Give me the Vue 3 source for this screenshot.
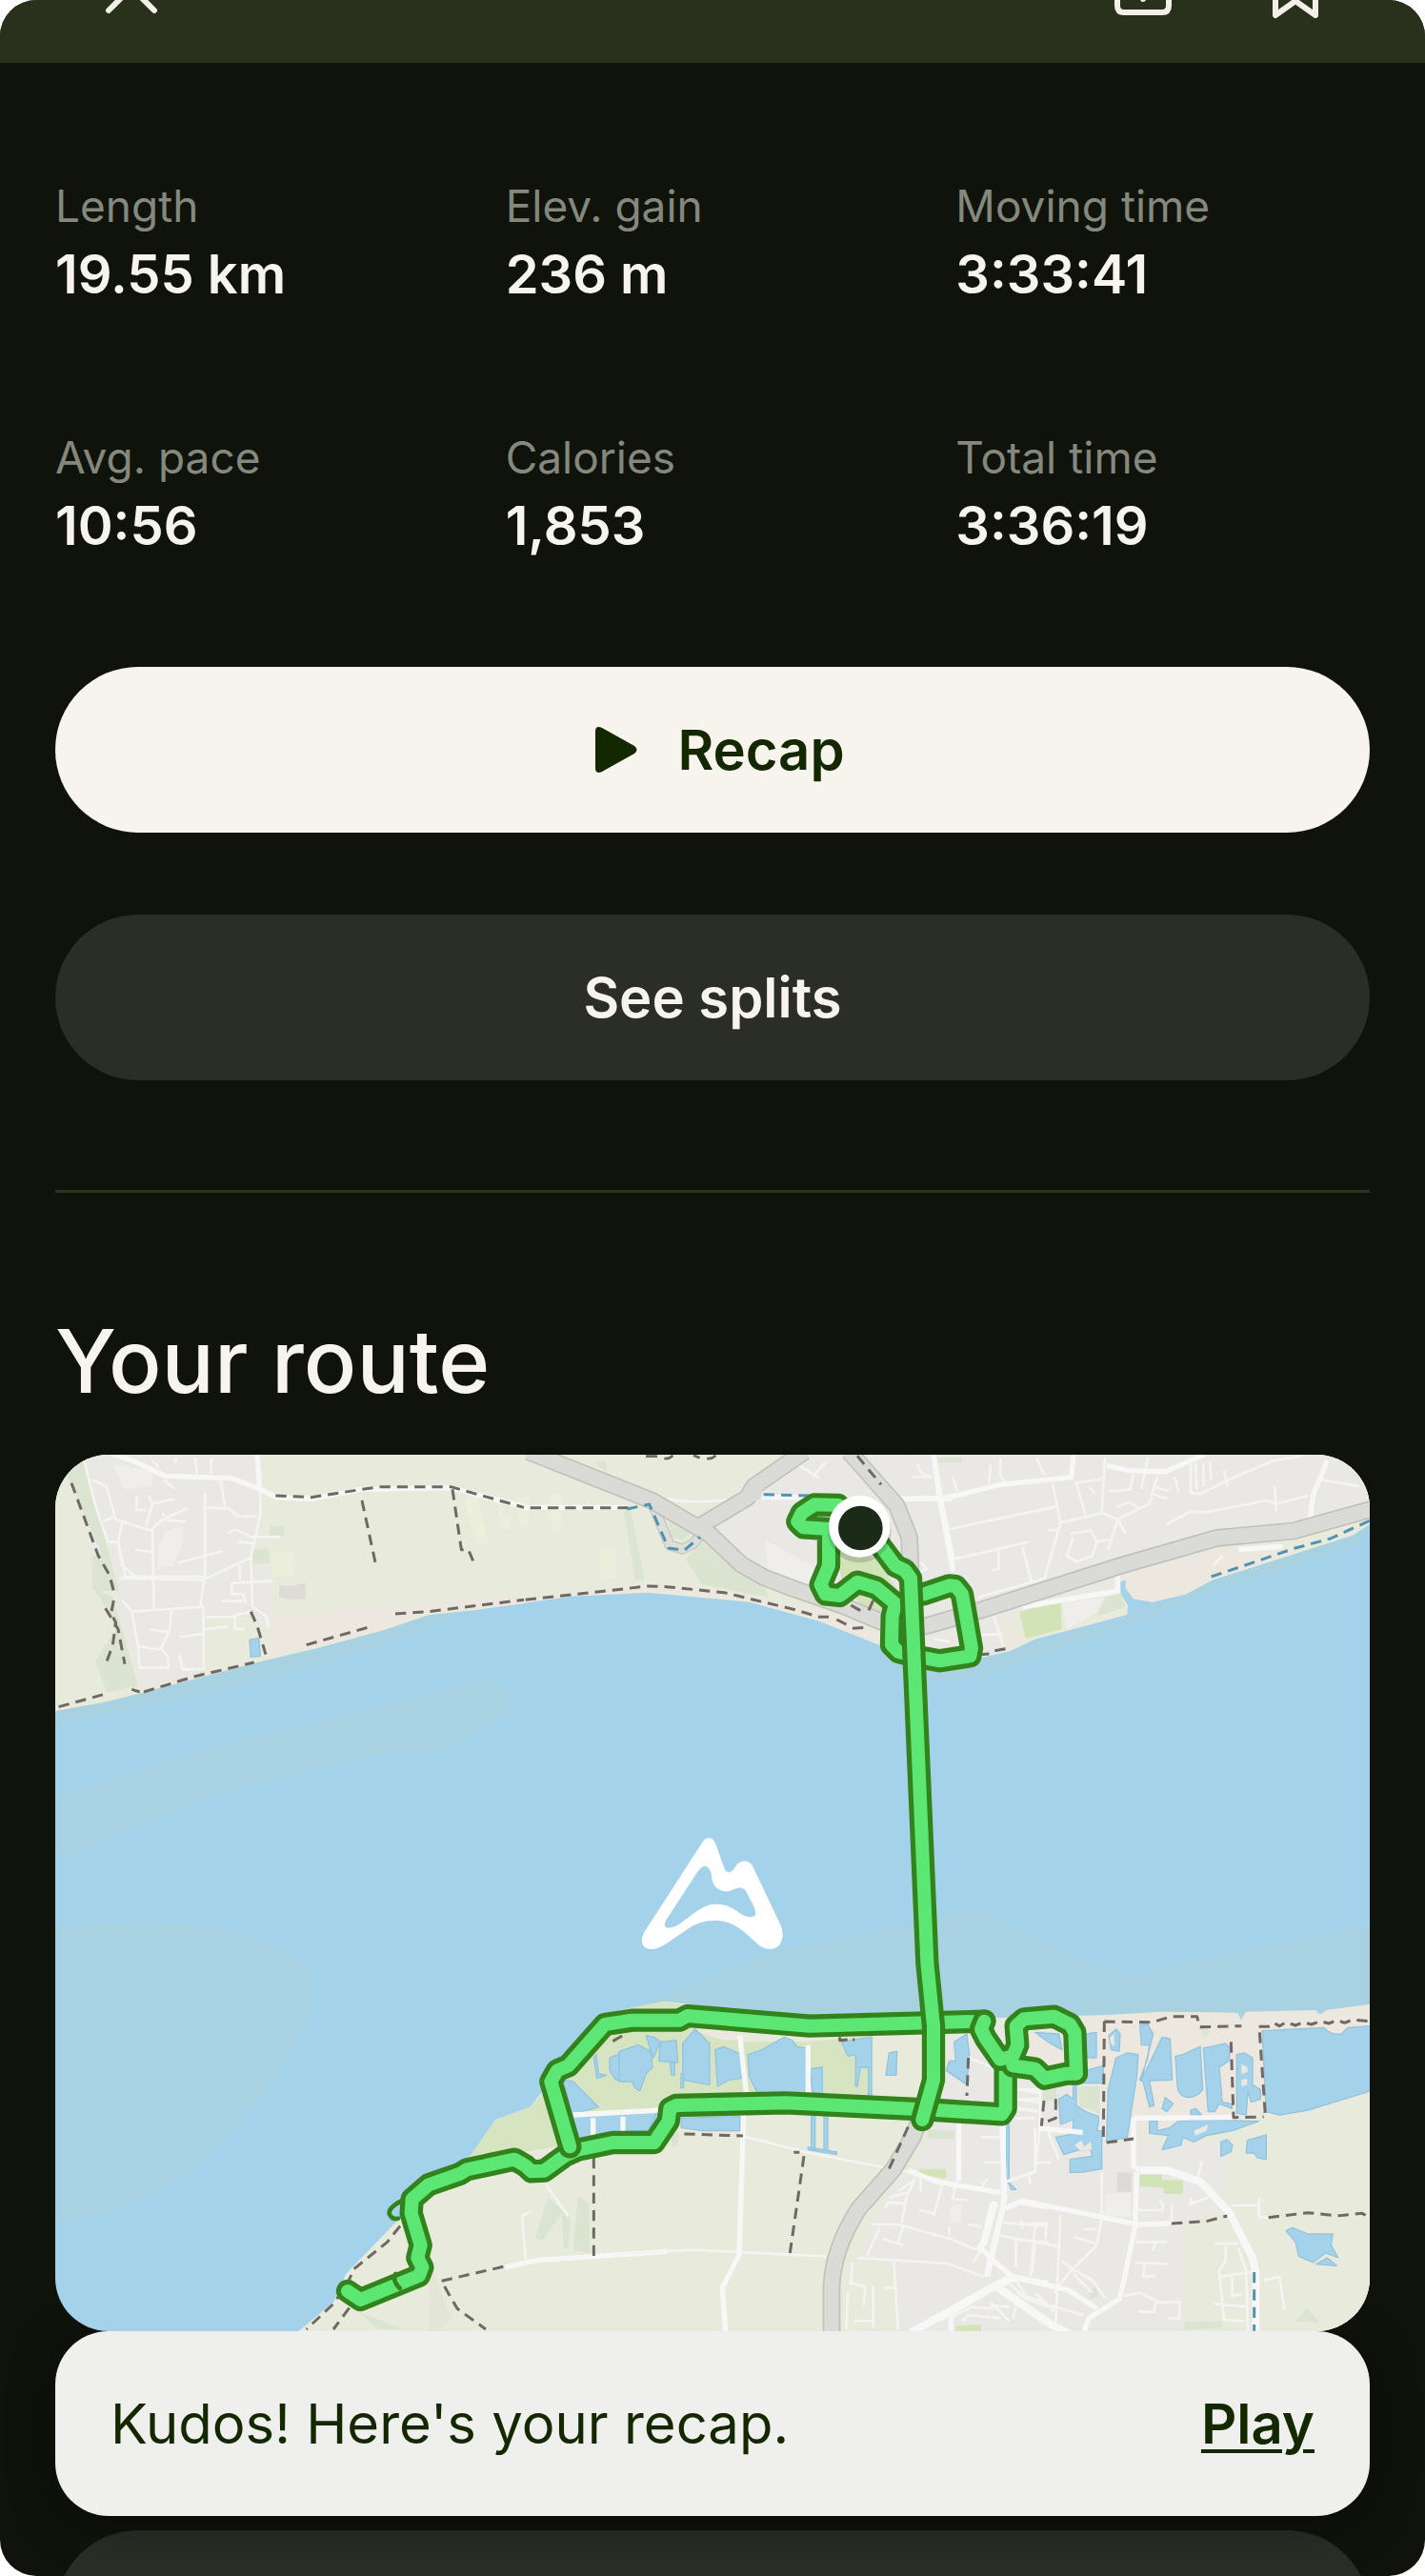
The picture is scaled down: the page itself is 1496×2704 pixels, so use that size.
<script setup>
const stats = [
  { label: 'Length', value: '19.55 km' },
  { label: 'Elev. gain', value: '236 m' },
  { label: 'Moving time', value: '3:33:41' },
  { label: 'Avg. pace', value: '10:56' },
  { label: 'Calories', value: '1,853' },
  { label: 'Total time', value: '3:36:19' },
]

// Map tiles: each tile has its own origin inside the 4140 x 2760 map.
const tiles = [
  {
    id: 'north-west',
    at: 'translate(-24 -51)',
    areas: [
      ['urban', 'M110 50H665L668 240L650 360L700 380L700 600L640 560L500 560L495 740L290 790L215 490L140 350Z'],
      ['sand', 'M690 690L700 560L1000 530L1500 490V520L1200 553L1060 600Z'],
      ['wood', 'M60 100L110 60L225 480L160 480L205 500L285 780L185 800L150 700L215 600L165 500L140 470V370L170 360L60 110Z'],
      ['lawn', 'M705 360H775V435H705ZM1310 190L1350 180L1390 330H1350ZM1430 240H1460V280H1430Z'],
      ['wood', 'M645 350L695 345L700 392L645 395ZM700 275H745V305H700Z'],
      ['block', 'M730 460L755 465L812 456V505L775 508L730 500Z'],
      ['pale', 'M370 290L425 275V330L395 400L345 410L350 340ZM205 80L330 100V150L240 160Z'],
      ['lake', 'M636 634L665 628L670 685L640 688Z'],
    ],
    lanes: [
      'M115 70L150 210L190 325L222 325L245 435H490M140 130L185 150L215 255L325 290L360 255L435 262M175 260L215 245M235 265L222 325L235 400L285 440M330 290L335 535M495 170V440L480 530M500 218L570 220L600 245H660M545 130L558 215M330 70L350 90M465 60L470 110M515 60V110M280 180V225H310M320 180L330 205L400 190M330 205L310 275M360 235L375 250L440 220M405 60L400 80M365 130L400 158',
      'M670 160V240L640 375L645 530L690 560L695 595M225 440L490 445L640 375M235 510L265 545L490 530L492 725L425 728L415 680M265 545L285 655L355 665L385 600L390 540M285 655L290 722H380V690L360 665M320 600L380 610M490 600L570 592M415 625L490 615M500 562H590V600H620M580 455L710 448M580 455V490H615L625 520M545 512H615M605 400V445M570 300Q570 285 600 290L640 310H735M600 325L645 330M410 392L550 355M275 350L330 357M580 560L640 545',
    ],
    roads: ['M200 45L280 75L370 118L580 125L670 160L720 185L830 190L990 160L1270 155L1500 215M660 50L668 160'],
    paths: [
      'M75 140L160 370L195 430L208 480M208 510L200 550L215 580L205 650L180 720M182 535L222 600L243 710M35 845L180 805M265 790L290 798M303 798L460 750L650 705M640 545L660 590L687 680M815 650L1015 593M1095 552L1200 545L1500 508',
      'M718 180L830 185L990 160L1050 152H1270L1500 217M990 195L1032 390M1275 160L1303 350L1325 350L1340 385',
    ],
    cyan: [],
  },
  {
    id: 'north-centre',
    at: 'translate(1326 -51)',
    areas: [
      ['urban', 'M1050 50H1500V670H1380L1180 560L1000 500L880 420L730 290L850 200L870 150Z'],
      ['pale', 'M910 320L1060 400L1060 460L920 430Z'],
      ['sand', 'M0 528L540 462L800 485L1200 560L1290 650L1270 645L1080 572L860 512L540 483L300 495L0 538Z'],
      ['wood', 'M660 380L740 300L900 440L920 500L710 460ZM465 230L485 220L530 445L500 445ZM370 75L410 70V105Z'],
      ['lawn', 'M390 340L440 350V440H390ZM60 150L90 250L110 290L80 280ZM130 190L170 180L160 290L135 270ZM230 170L270 180L265 290L235 290Z'],
      ['grass', 'M1140 350L1260 380L1330 480L1290 550L1240 560L1210 520L1150 450Z'],
      ['wood', 'M600 230L690 285L650 320L615 310Z'],
    ],
    lanes: ['M1010 80L1080 125M1060 120L1100 75M1390 80Q1400 120 1430 118M1400 390L1418 410L1380 430', 'M600 190Q700 210 840 185'],
    roads: ['M150 217H480M1300 190H1500M1440 50L1462 190L1500 380M900 185H1160'],
    paths: ['M170 218H480M155 508L540 465L600 467L780 485L1000 538L1080 562L1110 562M1135 570L1170 588M1185 598L1222 595M1180 525L1215 545M1250 510L1232 550M1200 55L1275 145'],
    cyan: ['M475 222L545 207L605 345L655 352L705 310M905 176L1160 183'],
  },
  {
    id: 'north-east',
    at: 'translate(2706 -51)',
    areas: [
      ['urban', 'M-10 45H1440V225L1200 300L650 450L640 490L300 545L320 640L210 690L-10 700Z'],
      ['sand', 'M668 425L900 345L1160 335L1200 362L940 445L855 490L750 515L690 505L665 470ZM280 560L340 630L300 670L280 660Z'],
      ['grass', 'M330 545L460 515L465 600L350 630Z'],
      ['pale', 'M465 520L600 500L570 550L480 600Z'],
      ['wood', 'M600 500L650 490L665 530L575 560ZM70 60H150V75H70Z'],
    ],
    lanes: [
      'M110 285L445 215M125 380L360 325M340 340L368 450M265 350V410L245 415M435 140L460 265L410 440L200 500M460 265L590 235L640 255L740 205L765 120M510 140L538 240M600 60L590 235M640 255L610 350M490 300L555 290L575 325L560 370L510 388L480 370L500 310M570 325L615 318M640 255L665 300M635 215L680 200L705 220M505 140L590 128M270 60V120L290 140M385 60L408 115',
      'M795 270L870 230L920 232L1110 195L1140 205L1240 180M1135 150L1140 230M870 80V170L900 175L1000 125L1130 70L1220 55M885 80L890 160M910 80V150M930 70L935 130M820 120L832 170M715 160L735 60M1285 130L1400 150M120 120L135 165M240 80L235 140M690 110L680 160L640 165M550 150L570 175M975 100L985 150M-10 120L55 122M250 560L280 655M200 620L280 615M60 630L110 640M940 400L970 370M420 288H455M610 165H650M750 150L800 165M750 175L795 190',
    ],
    roads: ['M0 188H80L130 180L270 145L495 122L500 50M60 50L80 190L122 420M605 85L670 100L790 105L915 50M1300 70L1255 180L1245 260M340 530L640 480V430M1020 350L1160 340'],
    paths: ['M208 680L235 678M253 668L290 662'],
    cyan: ['M935 435L1200 345L1310 315L1435 258'],
  },
  {
    id: 'south-west',
    at: 'translate(576 1599)',
    areas: [
      ['wet', 'M730 610L810 495L920 455L980 390L1060 570L880 600L730 630ZM1020 350L1160 200L1350 130V460L1060 470Z'],
      ['lake', 'M1025 370L1055 375L1135 455L1050 480ZM1050 485L1350 470L1300 530L1060 560ZM1170 300L1230 275L1270 250L1310 290L1305 330L1270 385L1265 405L1255 400L1250 375L1190 370L1170 340Z'],
      ['lake', 'M1120 300L1128 290L1135 350L1160 355L1130 365ZM1290 225L1315 215L1350 230V325L1325 320L1320 260L1295 265Z'],
      ['wood', 'M975 740L1045 800L1040 900L1025 900L1020 790L960 875L935 870ZM1070 735L1105 760L1108 915L1055 905ZM380 1100L520 1155H440Z'],
      ['shade', 'M605 950L670 1120L635 1160H600Z'],
    ],
    lanes: ['M905 935L895 800L925 780', 'M970 700L1040 800'],
    roads: ['M840 960L940 938L1350 910M1055 480L1330 465M1118 490V550M1212 485V540'],
    paths: ['M510 830L470 880L365 965L340 1020L295 1080L215 1155M350 1088L300 1155M835 958L640 1003L690 1090L780 1155M1120 615V925M1180 248L1220 225'],
    cyan: [],
  },
  {
    id: 'south-centre',
    at: 'translate(1776 1599)',
    areas: [
      ['wet', 'M0 150L140 122L300 150L395 250L600 250L800 230V430H0Z'],
      ['sand', 'M230 190H390V245L330 245L240 215Z'],
      ['urban', 'M800 220L1180 180L1350 240V1165H870V950H740L820 800L920 560V430H800Z'],
      ['land', 'M800 240H1000V430H800ZM920 520L970 520L930 680L870 650L800 800L750 950L720 1160H620V900L740 750ZM760 940L860 945L860 1010L820 1140L770 1110Z'],
      ['lake', 'M0 280L30 270L60 260L100 280L105 330L85 350L65 405L50 395L40 375L0 375ZM130 250L180 245L185 315L125 310ZM200 255L240 210L285 255L285 385L200 370ZM302 275L330 265L385 290V365L345 370L310 390ZM405 290L450 275L520 235L545 245L560 265L590 270V410H435L410 360ZM600 335L640 330V410H610Z'],
      ['lake', 'M110 235L130 250L108 300L100 280L85 230ZM195 350H203V395H195ZM160 315H175V355H165ZM15 475L120 470L90 530H20ZM195 490L380 485V530H260L195 520ZM700 250L795 235V420L785 420V330L760 330L750 390H745V290L720 295ZM850 285L875 280L873 355L840 355ZM1055 250L1095 225L1103 290L1095 385L1030 340L1040 310L1060 310ZM605 480H617V590H605ZM645 480H657V590H645ZM595 582L685 597V605L595 590ZM1218 500H1228V685H1218ZM1225 690L1250 715L1235 715Z'],
      ['grass', 'M945 650H1030V680L945 670ZM1060 1145L1140 1140V1160H1060Z'],
      ['wood', 'M970 525L1055 530V555H970ZM165 540L190 530L185 580H165Z'],
      ['pale', 'M1040 770L1080 760L1075 820L1045 820Z'],
    ],
    lanes: [
      'M395 548L600 600L910 660M0 918L230 905L650 925M750 930L1035 948L1150 990M795 825L880 825L1040 870L1140 910M930 680L905 740L890 820M1020 690L990 800M1060 690L1050 745L1100 748M920 690L880 720M850 740L905 725M835 775L850 755L900 760M820 835L780 925M830 870L895 890M895 830L880 880M1100 825L1140 830M1150 630H1200M1140 710L1160 680M1040 830V860M945 780L990 790M950 680L950 720',
      'M735 945L730 1010L775 1020L770 1080M800 1020V1150M865 940L870 1020L878 1155M740 1130L800 1128M720 1040L715 1155M835 1025H865M1115 945L1140 905M1310 520V660L1220 690M1240 875L1350 880M1310 830L1295 990M1250 880V960M1210 820L1350 830M1265 810L1270 840M1250 1000L1280 1050L1350 1075M1040 1120L1110 1085L1180 1090M1080 1130L1100 1110L1200 1120M1170 1080L1230 1085M1255 400L1320 410M1255 430L1320 440M1255 460L1320 470M1100 300L1200 340',
    ],
    roads: ['M392 480L378 920L325 1025L335 1160M595 260V410M380 230L400 410M910 655L1000 690L1200 725M1070 490V690M1205 500L1215 740L1155 990M1215 775L1260 755L1350 770M1190 760L1175 760L1140 905M1130 890L1180 940L1240 990L1350 1010M1045 1160V1120'],
    major: ['M920 1165L1180 1020L1250 990M1180 1015L1350 1135'],
    paths: ['M205 540L390 546M550 598H568M582 610L538 915M910 518L850 650M1100 300L1095 420M695 235V245L720 243M735 243L742 243'],
    cyan: [],
  },
  {
    id: 'south-east',
    at: 'translate(2886 1599)',
    areas: [
      ['urban', 'M200 380H415V560H800V760L670 830V1160H200Z'],
      ['sand', 'M180 220L350 175L600 160H840L850 185L865 158H1090L1100 165L1120 150L1255 132V210H1180L1165 225Q1130 230 1110 205L915 215L930 480L800 490L500 560L410 520V350L180 300Z'],
      ['land', 'M810 490L960 480L1255 405V1165H670V830L810 760Z'],
      ['lake', 'M200 220L275 225L285 275L240 250ZM360 225L393 220V300L362 300ZM360 340L415 325V380H320V360ZM275 430L300 415L320 430V380H330V450L360 470L400 485V500L395 530L410 530V650L350 660L310 662V620L380 610L375 590L340 590L290 605L265 550L320 540V495L280 510Z'],
      ['lake', 'M455 300L490 285L525 290L520 360L490 550L425 565L430 400ZM432 230L455 210L468 225L465 280L440 275ZM530 195L555 195L572 225L535 370L600 235L625 240L632 370L560 372L575 450L560 455L540 375L530 370L555 300L560 260L535 260Z'],
      ['lake', 'M642 295L665 290L720 265L728 400Q710 425 680 425Q650 420 648 390ZM730 270L800 255L815 270L810 310L780 330L790 440L820 445V460L780 445L765 470H745ZM835 290L860 285L885 300L885 385L910 400V430L880 440L870 405L865 480L835 475ZM600 460L610 425L635 445L615 470ZM690 465L705 460L725 480H690Z'],
      ['lake', 'M915 215L1110 205Q1130 230 1165 225L1185 205L1255 200V405L1060 465L970 480L928 470ZM560 500H585V530L625 520L650 500L720 495L905 500L820 530L740 545L700 565L665 550L660 575L600 590L620 545L560 538ZM785 565L805 558L822 575L818 595L785 610ZM868 560L928 543V620L900 615L890 600L865 600ZM990 845L1010 835L1060 855L1138 855L1132 890L1155 930L1115 915L1075 945L1030 925L1020 880ZM1085 950L1120 930L1150 955Z'],
      ['hole', 'M790 370Q790 345 812 350L815 420L790 430ZM325 575L345 560L355 580L375 565L378 590L340 592ZM435 238L448 225L450 265L438 255ZM850 320L868 330L870 345L850 350ZM850 370L868 365V385L850 390ZM700 530L745 510L740 530L705 545Z'],
      ['wood', 'M335 390H403V480L375 460L340 455ZM225 400L265 390L270 430L225 440ZM670 1130H790V1150L670 1158ZM1020 1130L1055 1090L1100 1135ZM370 1030L395 1025L400 1050L370 1060Z'],
      ['grass', 'M530 665L600 665V685H665V730L605 728V710L530 705Z'],
      ['block', 'M458 660L503 662V722H458Z'],
      ['pale', 'M418 730L500 725V800H418Z'],
      ['wood', 'M725 190L750 220L735 240L715 205Z'],
    ],
    lanes: [
      'M150 400H210M150 430H210M145 460L205 465M140 490L200 490M215 385V520L200 660L110 690M240 530L275 620M205 630H250M410 660V800L395 890L305 980L260 1040M280 795L270 1010L265 1140M180 660L185 700M30 550H90M155 810L160 830M155 825L235 820L232 870M90 860L280 895M140 885V940M200 890L190 980M350 840H395M325 865L390 885M285 940L325 970L380 1000L420 1055M510 830L625 822M520 880H615M515 945L620 950M545 950L540 990L580 985M580 880L570 910M520 780H600Q610 760 590 750M630 760V820M690 740V760L745 740',
      'M725 625L710 690M820 765H905V740M905 765V800L935 805M765 885L840 885M800 890V940L780 970L795 1125L860 1130M840 900L865 970L870 1160M780 990L880 975M820 990V1050L850 1045M765 1075L870 1085M480 1050L530 1040L590 1070H655V1120H620M580 1070L575 1100H525M110 1000L170 1060L260 1090M200 1040L260 1100M60 1070L120 1130M150 1040L130 1120M250 1080L350 1110M320 980L380 1040',
      'M920 1000L970 990L985 1095',
    ],
    roads: ['M510 490V640L530 655M510 490L820 488M210 522L350 535M100 510V770L50 990M105 775L160 750L400 800L520 825L625 822M75 760L40 890M520 660L515 830L480 1000L465 1060L370 1120L355 1160M130 990L300 1030L395 1090'],
    major: ['M530 655L620 655L720 690L810 785L885 930L895 980V1160M-100 1120L70 1020L130 990M70 1015L250 1140L310 1170'],
    paths: ['M418 185L415 560M418 186L570 188L630 170H710L718 203L850 200M905 202L935 202L950 190L970 200L990 188L1020 198L1045 188L1070 195L1100 185L1125 192L1150 182L1175 190L1200 180L1255 185M907 220L925 480M817 250L825 488L920 486M425 567L510 555M630 822L740 815L805 798M935 803L1060 788L1150 798L1230 790L1253 802M228 435L220 515M265 430V490L240 500'],
    cyan: ['M890 975V1160'],
  },
]

const trackParts = [
  'M921 2634L961 2661L1146 2585L1156 2559L1141 2529L1151 2489L1121 2389L1124 2344L1176 2299L1276 2264L1296 2251L1446 2219L1481 2239L1500 2257L1540 2255L1606 2207L1646 2189L1756 2166H1886L1931 2099L1936 2059L1956 2049L2301 2041L2776 2064L2981 2077L2993 2059V1909',
  'M1621 2179L1561 1974L1581 1939L1616 1924L1731 1794L1816 1781H1966L1991 1767L2376 1799L2926 1784',
  'M2926 1784L2916 1809L2931 1839L2976 1904L3016 1894L3031 1859L3026 1799L3051 1777L3146 1769L3196 1794L3211 1819L3216 1949L3186 1949L3116 1964L3086 1934L3016 1924',
  'M2466 159L2391 157L2351 184L2338 211L2356 229L2436 234V349L2411 409L2426 439L2471 444L2526 401L2586 419L2646 469L2636 509L2634 599L2656 621L2706 634L2786 649L2881 634L2886 609L2856 439L2836 414L2816 412L2736 439',
  'M2586 270L2646 350L2676 364L2694 389L2701 549L2746 1599L2766 1799V1969L2731 2094',
]
</script>

<template>
  <main class="screen">
    <header class="topbar">
      <button class="icon-btn" type="button" aria-label="Close">
        <svg viewBox="0 0 72 72" aria-hidden="true"><path d="M12 11L60 59M60 11L12 59" /></svg>
      </button>
      <div class="actions">
        <button class="icon-btn" type="button" aria-label="Share">
          <svg viewBox="0 0 72 72" aria-hidden="true">
            <path d="M22 25H16Q9 25 9 32V54Q9 61 16 61H56Q63 61 63 54V32Q63 25 56 25H50M36 47V3M22 17L36 3L50 17" />
          </svg>
        </button>
        <button class="icon-btn" type="button" aria-label="Save">
          <svg viewBox="0 0 72 72" aria-hidden="true"><path d="M15 64V8H57V64L36 49Z" /></svg>
        </button>
      </div>
    </header>

    <div class="content">
      <dl class="stats">
        <div v-for="s in stats" :key="s.label">
          <dt>{{ s.label }}</dt>
          <dd>{{ s.value }}</dd>
        </div>
      </dl>

      <div class="buttons">
        <button class="pill light" type="button">
          <svg class="play" viewBox="0 0 60 48" aria-hidden="true"><path d="M16 5Q16 -2 23 1L57 20Q62 24 57 28L23 47Q16 50 16 43Z" /></svg>
          Recap
        </button>
        <button class="pill dark" type="button">See splits</button>
      </div>

      <hr />

      <h2>Your route</h2>

      <svg class="map" viewBox="0 0 4140 2760" role="img" aria-label="Route map">
        <rect class="water" width="4140" height="2760" />
        <path class="shallow" d="M0 1079L246 999L526 909L876 829L1356 709Q1430 720 1436 809L1226 929L976 949L476 1079L0 1279ZM0 1490Q600 1420 806 1630L800 1780Q700 1960 576 2110Q350 2380 0 2420ZM1800 1800L1916 1700L2046 1649L2276 1559L2430 1530L2900 1430L3250 1600L3400 1640L3560 1600L4140 1480V1800Z" />
        <path class="shallow" d="M0 800L636 654L1176 505L1300 490L1036 600L636 720L0 850ZM2550 590L2786 670L2916 645L3086 590L3376 510L3646 400L4140 225L4100 290L3646 430L3376 540L2916 700L2700 720Z" />
        <path class="land" d="M0 0H4140V219L4086 254L3906 311L3646 394L3561 439L3456 464L3396 454L3371 419V374H3354L3356 439L3378 474L3376 504L3086 581L3006 619L2916 639L2786 664L2606 604L2406 524L2186 464L1866 434L1626 446L1326 489L1176 505L1036 552L826 609L636 654L276 749L156 779L0 807Z" />
        <path class="land" d="M4140 1731L4006 1749L3981 1764L3971 1749L3751 1754L3731 1784L3716 1757L3486 1754L3316 1764L2956 1774L2376 1774L2076 1749L1986 1729L1916 1721L1836 1749L1726 1779L1576 1939L1531 2009L1496 2054L1386 2094L1316 2199L1066 2424L916 2579L876 2669L766 2760H4140Z" />

        <g v-for="t in tiles" :key="t.id" :transform="t.at">
          <path v-for="(a, i) in t.areas" :key="i" :class="a[0]" :d="a[1]" />
        </g>
        <g v-for="t in tiles" :key="t.id" :transform="t.at">
          <path v-for="d in t.lanes" :key="d" class="lane" :d="d" />
          <path v-for="d in t.roads" :key="d" class="road" :d="d" />
          <path v-for="d in t.major" :key="d" class="road major" :d="d" />
        </g>

        <g v-for="kind in ['slip-casing', 'slip']" :key="kind" :class="kind">
          <path d="M1880 150L1935 285L1975 297L2010 280L2050 230" />
        </g>
        <g v-for="kind in ['highway-casing', 'highway']" :key="kind" :class="kind">
          <path d="M1490 -10L1880 145L2060 250L2160 345L2230 385L2320 420L2480 475L2640 542L2740 540L2920 488L3360 348L3660 262L3900 240L4150 170M2030 225L2180 135L2200 100L2360 -10M2500 -10L2650 160L2690 260L2694 370M2720 2100L2700 2150L2640 2250L2530 2375Q2450 2500 2445 2620V2770" />
        </g>
        <circle class="highway-fill" cx="2200" cy="120" r="26" />

        <g v-for="t in tiles" :key="t.id" :transform="t.at">
          <path v-for="d in t.paths" :key="d" class="footpath" :d="d" />
          <path v-for="d in t.cyan" :key="d" class="cycleway" :d="d" />
        </g>
        <path class="label-tail" d="M1860 5H1896M1918 12Q1935 14 1945 2M2010 2L2030 10M2052 12Q2070 14 2080 2" />

        <g v-for="d in trackParts" :key="d">
          <path class="track-casing" :d="d" />
          <path class="track" :d="d" />
        </g>
        <path class="spur" d="M1090 2350Q1050 2370 1052 2390Q1060 2410 1080 2405M1072 2580Q1060 2600 1085 2625" />

        <g>
          <circle class="marker-shadow" cx="2533" cy="240" r="100" />
          <circle class="marker-ring" cx="2533" cy="226" r="97" />
          <circle class="marker-dot" cx="2536" cy="231" r="70" />
        </g>

        <path
          class="logo"
          transform="translate(1746 1119)"
          fill-rule="evenodd"
          d="M312 88C326 88 330 98 335 110L362 185Q372 205 388 190L402 170Q428 150 448 172L540 365Q552 400 535 425Q505 450 470 425L425 385Q380 348 340 348Q285 345 245 375L180 420Q150 440 125 438Q95 430 103 400Q105 390 112 380L290 105Q300 88 312 88ZM300 176Q290 176 275 197L185 335Q168 358 176 368Q185 376 215 362L270 322Q305 295 335 296Q370 294 410 325Q440 345 458 332Q462 325 455 305L430 257Q422 240 400 246L375 256Q345 258 330 238Q320 220 320 200Q314 178 300 176Z"
        />
      </svg>

      <div class="toast" role="status">
        <span>Kudos! Here's your recap.</span>
        <a href="#recap">Play</a>
      </div>

      <button class="pill dark next" type="button" aria-label="More"></button>
    </div>
  </main>
</template>

<style>
body {
  margin: 0;
  background: #fff;
}
</style>

<style scoped>
.screen {
  box-sizing: border-box;
  height: 100vh;
  overflow: hidden;
  border-radius: 38px;
  background: #10130c;
  color: #f7f4ed;
  font-family: Inter, "Noto Sans", sans-serif;
}
button {
  border: 0;
  font: inherit;
  color: inherit;
  cursor: pointer;
}
.topbar {
  box-sizing: border-box;
  display: flex;
  justify-content: space-between;
  align-items: flex-end;
  height: 66px;
  padding: 0 100px 42px 102px;
  overflow: hidden;
  background: #29301c;
}
.actions {
  display: flex;
  gap: 88px;
}
.icon-btn {
  width: 72px;
  height: 72px;
  padding: 0;
  background: none;
}
.icon-btn svg {
  display: block;
  fill: none;
  stroke: #f3f0e8;
  stroke-width: 6;
  stroke-linecap: round;
  stroke-linejoin: round;
}
.content {
  padding: 118px 58px 0;
}
.stats {
  display: grid;
  grid-template-columns: repeat(3, 1fr);
  gap: 120px 38px;
  margin: 0;
}
dt {
  color: #85887c;
  font-size: 46px;
  line-height: 64px;
}
dd {
  margin: 0;
  font-size: 56px;
  font-weight: 600;
  line-height: 80px;
}
.buttons {
  display: grid;
  gap: 86px;
  margin-top: 108px;
}
.pill {
  display: flex;
  align-items: center;
  justify-content: center;
  gap: 42px;
  width: 100%;
  height: 174px;
  border-radius: 87px;
  font-size: 58px;
  font-weight: 600;
}
.light {
  background: #f7f4ed;
  color: #142800;
}
.dark {
  background: #2b2d27;
}
.play {
  width: 60px;
  height: 48px;
  fill: currentColor;
}
hr {
  height: 3px;
  margin: 115px 0 0;
  border: 0;
  background: #2c341d;
}
h2 {
  margin: 123px 0 0;
  font-size: 92px;
  font-weight: 500;
  line-height: 108px;
}
.map {
  position: relative;
  z-index: 1;
  display: block;
  width: 100%;
  margin-top: 44px;
  border-radius: 56px;
}
.toast {
  position: relative;
  display: flex;
  align-items: center;
  justify-content: space-between;
  height: 194px;
  padding: 0 58px;
  border-radius: 56px;
  background: #efefed;
  color: #142800;
  font-size: 58px;
  box-shadow: 0 8px 50px rgba(0, 0, 0, 0.4);
}
.toast a {
  color: inherit;
  font-weight: 600;
  text-decoration-thickness: 4px;
  text-underline-offset: 6px;
}
.next {
  margin-top: 15px;
}

.water { fill: #a5d2eb; }
.shallow { fill: #a8d1e1; }
.land { fill: #e8ebdb; }
.urban { fill: #e9e8e4; }
.sand, .hole { fill: #ece8e0; }
.wood { fill: #dbe4d0; }
.shade { fill: #e3e6d7; }
.wet { fill: #d7e4c1; }
.grass { fill: #d2e3b8; }
.lawn { fill: #ebefdb; }
.pale { fill: #efeeec; }
.block { fill: #dcdbd7; }
.lake { fill: #a5d2eb; stroke: #94c3dc; stroke-width: 4; stroke-linejoin: round; }
.lane, .road, .footpath, .cycleway, .label-tail, .slip, .slip-casing, .highway,
.highway-casing, .track, .track-casing, .spur {
  fill: none;
  stroke-linejoin: round;
}
.lane { stroke: #f4f4f2; stroke-width: 8; }
.road { stroke: #f7f7f7; stroke-width: 16; }
.major { stroke-width: 24; }
.slip-casing { stroke: #c6c6c3; stroke-width: 34; }
.slip { stroke: #dddeda; stroke-width: 26; }
.highway-casing { stroke: #c0c0bd; stroke-width: 56; }
.highway { stroke: #dadbd6; stroke-width: 46; }
.highway-fill { fill: #dadbd6; }
.footpath { stroke: #6f6864; stroke-width: 9; stroke-dasharray: 34 21; }
.cycleway { stroke: #4f93b0; stroke-width: 9; stroke-dasharray: 34 21; }
.label-tail { stroke: #6a6a66; stroke-width: 8; }
.track-casing { stroke: #33831c; stroke-width: 73; stroke-linecap: round; }
.track { stroke: #5ce774; stroke-width: 42; stroke-linecap: round; }
.spur { stroke: #33831c; stroke-width: 14; stroke-linecap: round; }
.marker-shadow { fill: rgba(0, 0, 0, 0.15); }
.marker-ring { fill: #fff; }
.marker-dot { fill: #1c2b17; }
.logo { fill: #fff; }
</style>
